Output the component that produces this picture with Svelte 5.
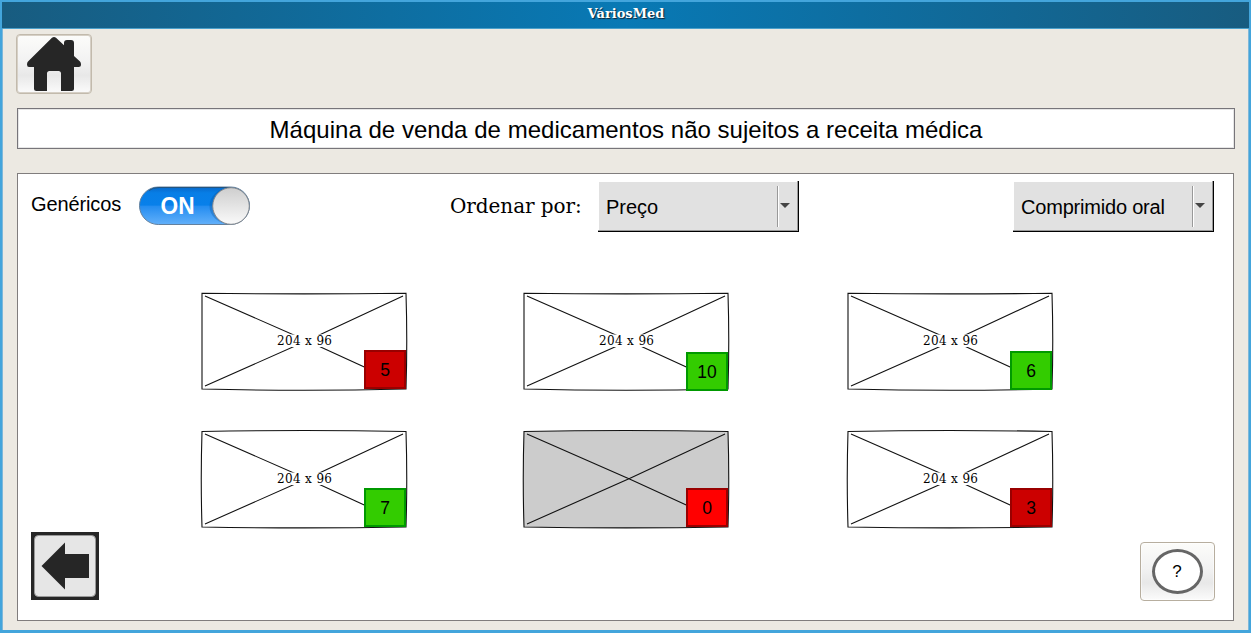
<script>
  const products = [
    { stock: 5, tone: 'low', top: 57, height: 39 },
    { stock: 10, tone: 'ok', top: 59, height: 39 },
    { stock: 6, tone: 'ok', top: 58, height: 39 },
    { stock: 7, tone: 'ok', top: 57, height: 39, lower: true },
    { stock: 0, tone: 'none', top: 57, height: 39, lower: true },
    { stock: 3, tone: 'low', top: 57, height: 39, lower: true }
  ];
</script>

{#snippet combo(label, kind)}
  <button class="combo {kind}">
    <span class="combo-label">{label}</span>
    <span class="divider"></span>
    <svg width="10" height="5" viewBox="0 0 10 5"><path d="M0 0H10L5 5Z" fill="#444" /></svg>
  </button>
{/snippet}

<div class="window">
  <header class="titlebar">VáriosMed</header>
  <main>
    <button class="soft home" aria-label="Início">
      <svg width="56" height="56" viewBox="26 36 56 56">
        <path fill="#262626" d="M52 37.800Q54 36 56 37.800L64 45.300V43Q64 40 67 40H71Q74 40 74 43V56L80 61.500Q81 62.600 81 64.500Q81 67 78.500 67H74V88.500Q74 91 71.500 91H61V73.500Q61 71 58.500 71H49.500Q47 71 47 73.500V91H36.500Q34 91 34 88.500V67H29Q27 67 27 64.500Q27 62.600 28 61.500Z" />
      </svg>
    </button>

    <h1>Máquina de venda de medicamentos não sujeitos a receita médica</h1>

    <section class="panel">
      <div class="toolbar">
        <span class="generic">Genéricos</span>
        <svg class="toggle" width="112" height="40" viewBox="0 0 112 40">
          <defs>
            <linearGradient id="track" x2="0" y2="1">
              <stop offset="0" stop-color="#0868c8" /><stop offset=".16" stop-color="#077ee6" />
              <stop offset=".48" stop-color="#0880ea" /><stop offset=".52" stop-color="#258df0" />
              <stop offset="1" stop-color="#62b0fa" />
            </linearGradient>
            <linearGradient id="knob" x2="0" y2="1">
              <stop offset="0" stop-color="#cecece" /><stop offset="1" stop-color="#fafafa" />
            </linearGradient>
          </defs>
          <rect x=".5" y="1" width="110" height="37.500" rx="18.750" fill="url(#track)" stroke="#64819e" />
          <path d="M10 4.500Q14 1.500 20 1.500H92" fill="none" stroke="#24557f" />
          <ellipse cx="90.500" cy="20" rx="20" ry="18" fill="#0b559e" opacity=".35" />
          <circle cx="92" cy="20" r="18.300" fill="url(#knob)" stroke="#84888d" />
          <text x="21.500" y="28" textLength="34" lengthAdjust="spacingAndGlyphs">ON</text>
        </svg>
        <span class="order">Ordenar por:</span>
        {@render combo('Preço', '')}
        <div class="push"></div>
        {@render combo('Comprimido oral', 'form')}
      </div>

      <div class="products">
        {#each products as p}
          <article class="product">
            <svg width="208" height="100" viewBox="-2 -2 208 100">
              <path
                d={p.lower
                  ? 'M0 .5Q102 -1.500 204 .5Q205.500 48 204 96Q102 97.800 0 96Q-1.500 48 0 .5Z'
                  : 'M0 .3Q102 1.500 204 .3Q205.500 48 204 96Q102 98.500 0 96Z'}
                fill={p.stock === 0 ? '#ccc' : '#fff'} stroke="#111" stroke-width="1.100" />
              <path d="M3 3L105.500 48L207 94.500M201 3L105.500 47.500L3 93" fill="none" stroke="#111" stroke-width="1.100" clip-path="url(#frame)" />
              <clipPath id="frame"><rect x="0" y="0" width="203" height="96" /></clipPath>
              {#if p.stock !== 0}
                <rect x="75" y="41.500" width="57" height="12.500" fill="#fff" />
                <text x="75" y="52" textLength="55">204 x 96</text>
              {/if}
            </svg>
            <span class="stock {p.tone}" style="top:{p.top}px;height:{p.height}px">{p.stock}</span>
          </article>
        {/each}
      </div>

      <div class="actions">
        <button class="back" aria-label="Voltar">
          <svg width="68" height="68" viewBox="0 0 68 68">
            <rect width="68" height="68" fill="#262626" />
            <rect x="3.500" y="3.500" width="61" height="61" rx="4" fill="#e6e6e6" stroke="#999" />
            <path d="M10.500 34L34 10.500V22H58V46H34V57.500Z" fill="#262626" />
          </svg>
        </button>
        <button class="soft help">
          <span>?</span>
        </button>
      </div>
    </section>
  </main>
</div>

<style>
  :global(body) { margin: 0; }
  .window {
    box-sizing: border-box;
    width: 1251px;
    height: 633px;
    border: 2px solid #43a5dc;
    border-bottom-width: 3px;
    background: #ece9e2;
    font-family: "Liberation Sans", sans-serif;
    color: #000;
    display: flex;
    flex-direction: column;
  }
  .titlebar {
    box-sizing: border-box;
    height: 27px;
    border-bottom: 1px solid #4ba0cb;
    background: linear-gradient(90deg, #185c80, #0879b5 50%, #185c80);
    color: #fff;
    font: bold 13px/23px "DejaVu Serif", serif;
    text-align: center;
    text-shadow: 1px 1px 1px #123;
    padding-left: 1px;
  }
  main {
    flex: 1;
    padding: 5px 13px 0 14px;
    border-left: 1px solid #7eb8da;
    border-right: 1px solid #7eb8da;
    display: flex;
    flex-direction: column;
    align-items: flex-start;
  }
  button { font-family: inherit; color: inherit; padding: 0; margin: 0; }
  .soft {
    box-sizing: border-box;
    border: 1px solid #b7ae9f;
    border-radius: 4px;
    background: linear-gradient(#fcfcfa, #f2f2f2 45%, #e8e8e8 70%, #fbfbfb);
    box-shadow: inset 0 0 0 1px #ffffff80;
    display: flex;
    align-items: center;
    justify-content: center;
  }
  .home {
    width: 76px;
    height: 60px;
    margin-left: -1px;
    border-color: #c2baac;
    box-shadow: inset 0 0 0 1px #d6d0c6;
  }
  .home svg { display: block; }
  h1 {
    box-sizing: border-box;
    width: 1218px;
    height: 41px;
    margin: 14px 0 24px;
    border: 1px solid #77757a;
    background: #fff;
    box-shadow: inset 0 0 0 1px #e6e6e6;
    font-size: 24px;
    letter-spacing: .03px;
    line-height: 42px;
    font-weight: 400;
    text-align: center;
    white-space: nowrap;
  }
  .panel {
    box-sizing: border-box;
    width: 1217px;
    height: 448px;
    border: 1px solid #807d7d;
    background: #fff;
    padding: 7px 19px 0 13px;
    display: flex;
    flex-direction: column;
  }
  .toolbar { display: flex; height: 51px; }
  .generic { width: 108px; font-size: 20px; line-height: 46px; letter-spacing: -.12px; }
  .toggle { margin: 5px 199px 0 0; }
  .toggle text {
    font: bold 23px "Liberation Sans", sans-serif;
    fill: #fff;
  }
  .order {
    width: 148px;
    font: 20px/50px "DejaVu Serif", serif;
    letter-spacing: -.06px;
    white-space: nowrap;
  }
  .combo {
    box-sizing: border-box;
    width: 201px;
    height: 51px;
    border: 0 solid #000;
    border-width: 0 1px 1px 0;
    background: #e1e1e1;
    box-shadow: inset -1px -1px #999, inset 1px 1px #fff;
    display: flex;
    align-items: center;
    font-size: 20px;
    text-align: left;
  }
  .form { letter-spacing: -.2px; }
  .combo-label { width: 171px; padding: 2px 0 0 8px; white-space: nowrap; }
  .divider { width: 1px; height: 41px; background: #999; box-shadow: 1px 0 #fff; }
  .combo svg { margin: 0 0 1px 2px; }
  .push { flex: 1; }
  .products {
    display: grid;
    grid-template-columns: 322px 324px 206px;
    grid-auto-rows: 138px;
    margin: 61px 0 0 171px;
    height: 239px;
  }
  .product { position: relative; width: 206px; height: 98px; }
  .product svg { display: block; margin: -2px; }
  .product text { font: 12px "DejaVu Serif", serif; fill: #000; }
  .stock {
    position: absolute;
    left: 162px;
    box-sizing: border-box;
    width: 42px;
    border: 2px solid;
    display: flex;
    align-items: center;
    justify-content: center;
    padding-top: 2px;
    font-size: 17.500px;
  }
  .low { background: #c00; border-color: #900; }
  .ok { background: #3c0; border-color: #090; }
  .none { background: #f00; border-color: #900; }
  .actions { display: flex; justify-content: space-between; margin-right: -1px; }
  .back { border: 0; width: 68px; height: 68px; background: none; }
  .back svg { display: block; }
  .help { width: 75px; height: 59px; margin-top: 10px; }
  .help span {
    box-sizing: border-box;
    width: 51px;
    height: 45px;
    margin-right: 1px;
    border: 3px solid #666;
    border-radius: 50%;
    background: #fff;
    font-size: 17px;
    line-height: 40px;
    text-align: center;
  }
</style>
